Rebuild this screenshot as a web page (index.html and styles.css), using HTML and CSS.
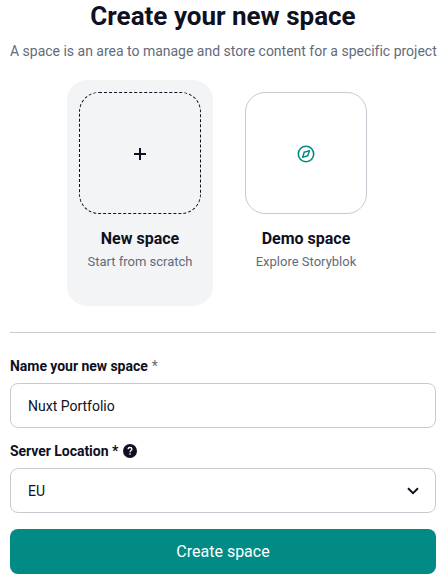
FILE: index.html
```html
<!DOCTYPE html>
<html lang="en">
<head>
<meta charset="utf-8">
<title>Create your new space</title>
<link rel="stylesheet" href="styles.css">
</head>
<body>
<main class="page">
  <h1 class="title">Create your new space</h1>
  <p class="subtitle">A space is an area to manage and store content for a specific project</p>
  <div class="choices">
    <div class="choice choice--selected">
      <div class="tile">
        <svg width="14" height="14" viewBox="0 0 14 14"><path d="M7 1v12M1 7h12" fill="none" stroke="#0f1021" stroke-width="2"/></svg>
      </div>
      <h2 class="choice-name">New space</h2>
      <p class="choice-note">Start from scratch</p>
    </div>
    <div class="choice">
      <div class="tile">
        <svg width="18" height="18" viewBox="0 0 18 18" fill="none" stroke="#028a84" stroke-width="1.6"><circle cx="9" cy="9" r="7.7"/><path d="M12.4 5.600 7.2 7.2 5.6 12.400 10.8 10.8Z" stroke-width="1.500" stroke-linejoin="round"/></svg>
      </div>
      <h2 class="choice-name">Demo space</h2>
      <p class="choice-note">Explore Storyblok</p>
    </div>
  </div>
  <form class="form">
    <label class="label label--name">Name your new space <span class="required">*</span></label>
    <div class="field">Nuxt Portfolio</div>
    <label class="label label--server">Server Location *
      <svg class="help" width="14" height="14" viewBox="0 0 14 14"><circle cx="7" cy="7" r="7" fill="#0f1021"/><path d="M5.1 5.3C5.1 4.2 5.9 3.5 7 3.5s1.9.7 1.9 1.7C8.900 6.500 7 6.600 7 8.200M7 9.300v1.500" fill="none" stroke="#fff" stroke-width="1.300"/></svg>
    </label>
    <div class="field">EU
      <svg width="12" height="8" viewBox="0 0 12 8"><path d="M1 1.300 6 6.200 11 1.300" fill="none" stroke="#0f1021" stroke-width="2"/></svg>
    </div>
    <button class="submit" type="button">Create space</button>
  </form>
</main>
</body>
</html>
```
FILE: styles.css
```css
* { box-sizing: border-box; }
body {
  margin: 0;
  background: #fff;
  color: #0f1021;
  font-family: Roboto, sans-serif;
  overflow: hidden;
}
.page { width: 426px; margin-left: 10px; }
h1, h2, p { margin: 0; text-align: center; white-space: nowrap; }
.title { font-size: 26px; line-height: 32px; font-weight: 700; }
.subtitle {
  margin-top: 9px;
  color: #636b7a;
  font-size: 14px;
  line-height: 20px;
  letter-spacing: -0.01px;
}
.choices {
  display: flex;
  justify-content: center;
  gap: 20px;
  margin-top: 19px;
}
.choice {
  width: 146px;
  height: 226px;
  padding: 12px;
  border-radius: 20px;
}
.choice--selected { background: #f3f4f6; }
.tile {
  display: flex;
  align-items: center;
  justify-content: center;
  height: 122px;
  padding-top: 2px;
  border: 1px solid #c8cad2;
  border-radius: 20px;
}
.choice--selected .tile { border: 1px dashed #0f1021; }
.choice-name {
  margin-top: 14px;
  font-size: 16px;
  line-height: 22px;
  font-weight: 700;
}
.choice-note {
  margin-top: 2px;
  color: #636b7a;
  font-size: 13px;
  line-height: 20px;
}
.form {
  margin-top: 26px;
  padding-top: 23px;
  border-top: 1px solid #c8cad2;
}
.label {
  display: flex;
  align-items: center;
  height: 20px;
  font-size: 14px;
  font-weight: 700;
  letter-spacing: -0.04px;
}
.label--server { margin-top: 13px; }
.required { margin-left: 4px; color: #636b7a; font-weight: 400; }
.help { margin-left: 5px; }
.field {
  display: flex;
  align-items: center;
  justify-content: space-between;
  height: 45px;
  margin-top: 7px;
  padding: 0 16px 0 17px;
  border: 1px solid #c8cad2;
  border-radius: 8px;
  font-size: 14px;
}
.submit {
  display: block;
  width: 100%;
  height: 45px;
  margin-top: 16px;
  border: 0;
  border-radius: 8px;
  background: #028a84;
  color: #fff;
  font: 400 16px Roboto, sans-serif;
}
```
